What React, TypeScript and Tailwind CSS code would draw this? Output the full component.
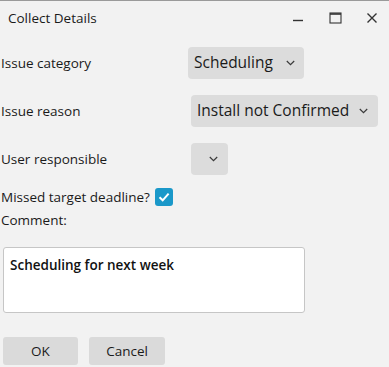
import React from "react";

const font = { fontFamily: '"Open Sans", "Noto Sans", sans-serif' };

function Chevron() {
  return (
    <svg width="9" height="6" viewBox="0 0 9 6" className="shrink-0">
      <path d="M0.8 1 L4.5 4.7 L8.2 1" fill="none" stroke="#3a3a3a" strokeWidth="1.2" />
    </svg>
  );
}

function Dropdown({ label, className }: { label?: string; className?: string }) {
  return (
    <div
      className={
        "h-[32px] rounded-[4px] bg-[#dcdcdc] flex items-center justify-between pl-[6px] pr-[9px] text-[15.5px] text-[#1a1a1a] whitespace-nowrap " +
        (className ?? "")
      }
    >
      {label ? <span className="leading-none">{label}</span> : <span />}
      <span className="flex">
        <Chevron />
      </span>
    </div>
  );
}

export default function App() {
  return (
    <div
      className="w-[389px] h-[367px] bg-[#f2f2f2] border-t border-[#9a9a9a] flex flex-col text-[#1a1a1a] overflow-hidden"
      style={font}
    >
      {/* Title bar */}
      <div className="h-[38px] flex items-center pl-[8px] pr-[11px]">
        <span className="text-[13.5px] mt-[-4px]">Collect Details</span>
        <div className="ml-auto flex items-center mt-[-4px]">
          <svg width="12" height="12" viewBox="0 0 12 12">
            <path d="M1 8.5 H11" stroke="#333" strokeWidth="1.4" />
          </svg>
          <svg width="13" height="12" viewBox="0 0 13 12" className="ml-[25px]">
            <rect x="1" y="1" width="11" height="10" fill="none" stroke="#333" strokeWidth="1.1" />
            <path d="M1 2 H12" stroke="#333" strokeWidth="1.6" />
          </svg>
          <svg width="12" height="12" viewBox="0 0 12 12" className="ml-[24px]">
            <path d="M1.5 1.5 L10.5 10.5 M10.5 1.5 L1.5 10.5" stroke="#333" strokeWidth="1.4" />
          </svg>
        </div>
      </div>

      {/* Form rows */}
      <div className="grid grid-cols-[188px_1fr]">
        <div className="h-[48px] flex items-center pl-[1px] text-[13.5px]">Issue category</div>
        <div className="h-[48px] flex items-center">
          <Dropdown label="Scheduling" className="w-[116px]" />
        </div>
        <div className="h-[48px] flex items-center pl-[1px] text-[13.5px]">Issue reason</div>
        <div className="h-[48px] flex items-center pl-[3px]">
          <Dropdown label="Install not Confirmed" className="w-[187px] pr-[10px]" />
        </div>
        <div className="h-[48px] flex items-center pl-[1px] text-[13.5px]">User responsible</div>
        <div className="h-[48px] flex items-center pl-[3px]">
          <Dropdown className="w-[37px] pr-[10px]" />
        </div>
      </div>

      {/* Checkbox row */}
      <div className="h-[28px] flex items-center pl-[1px] text-[13.5px]">
        <span>Missed target deadline?</span>
        <span className="ml-[5px] w-[18px] h-[18px] rounded-[3px] bg-[#1a98c9] flex items-center justify-center">
          <svg width="14" height="14" viewBox="0 0 14 14">
            <path d="M2.5 7.2 L5.7 10.3 L11.6 3.6" fill="none" stroke="#fff" strokeWidth="2" />
          </svg>
        </span>
      </div>
      <div className="h-[18px] flex items-center pl-[1px] text-[13.5px]">Comment:</div>

      {/* Textarea */}
      <div className="mt-[18px] ml-[3px] w-[302px] h-[66px] bg-white border border-[#c6c6c6] rounded-[3px] px-[6px] pt-[4px]">
        <span className="text-[13.5px] font-semibold text-[#111]">Scheduling for next week</span>
      </div>

      {/* Buttons */}
      <div className="mt-[24px] flex pl-[3px]">
        <div className="w-[75px] h-[28px] rounded-[3px] bg-[#dadada] flex items-center justify-center text-[13.5px]">
          OK
        </div>
        <div className="ml-[11px] w-[76px] h-[28px] rounded-[3px] bg-[#dadada] flex items-center justify-center text-[13.5px]">
          Cancel
        </div>
      </div>
    </div>
  );
}
